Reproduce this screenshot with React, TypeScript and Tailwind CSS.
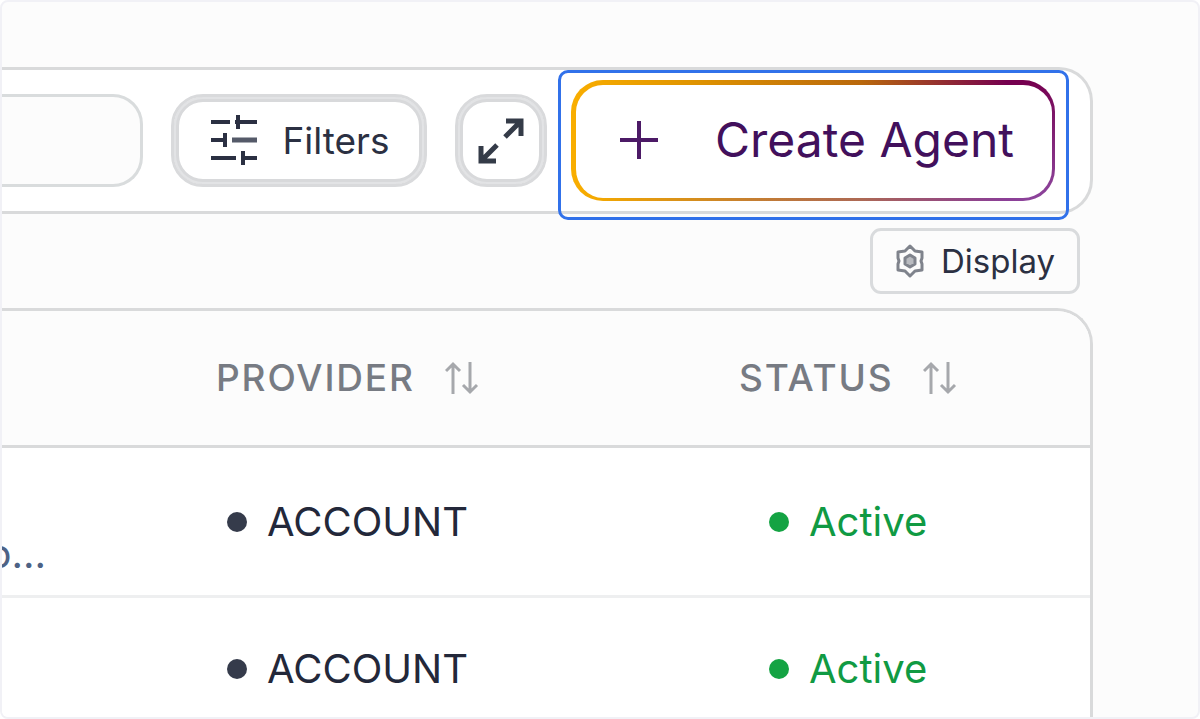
import React from 'react';

interface Agent {
  id: number;
  description: string;
  provider: string;
  status: string;
}

const agents: Agent[] = [
  { id: 1, description: 'o...', provider: 'ACCOUNT', status: 'Active' },
  { id: 2, description: '', provider: 'ACCOUNT', status: 'Active' },
];

const FiltersIcon = () => (
  <svg width="48" height="56" viewBox="0 0 48 56" fill="none" stroke="#2b3042" strokeWidth="4" aria-hidden="true">
    <path d="M1 9h19M25 9h22M1 27h14M1 45h25M31 45h16" />
    <path d="M22 27h25" stroke="#555a69" strokeWidth="5" />
    <path d="M28 2v14M15 20v14M33 38v14" />
  </svg>
);

const ExpandIcon = () => (
  <svg width="48" height="48" viewBox="0 0 48 48" fill="none" stroke="#343b48" strokeWidth="5" aria-hidden="true">
    <path d="M29 4h15v15M44 4L28 20M4 29v15h15M4 44l16-16" />
  </svg>
);

const PlusIcon = () => (
  <svg width="38" height="38" viewBox="0 0 38 38" fill="none" stroke="#4c1a66" strokeWidth="4" aria-hidden="true">
    <path d="M19 0v38M0 19h38" />
  </svg>
);

const GearIcon = () => (
  <svg width="30" height="34" viewBox="0 0 30 34" fill="none" stroke="#7f838c" strokeWidth="3" strokeLinejoin="round" aria-hidden="true">
    <path d="M15 2l5 5 7 1v6l-1 3 1 3v6l-7 1-5 5-5-5-7-1v-6l1-3-1-3V8l7-1z" />
    <path d="M15 11l5 3v6l-5 3-5-3v-6z" fill="#b9bbc0" />
  </svg>
);

const SortIcon = () => (
  <svg width="34" height="34" viewBox="0 0 34 34" fill="none" stroke="#a6a8ac" strokeWidth="3" aria-hidden="true">
    <path d="M8 33V3M1 10l7-7 7 7M25 1v30M18 24l7 7 7-7" />
  </svg>
);

interface SortHeaderProps {
  label: string;
}

const SortHeader: React.FC<SortHeaderProps> = ({ label }) => (
  <th scope="col" className="h-[137px] border-b-3 border-[#d9dadb] p-0 pl-4 text-left align-middle">
    <button type="button" className="flex items-center gap-[30px] text-[37px] leading-10 font-medium tracking-wider text-[#777b83]">
      {label}
      <SortIcon />
    </button>
  </th>
);

const Toolbar = () => (
  <div className="flex items-center rounded-r-[34px] border-3 border-l-0 border-[#d9dadb] bg-white py-[10px] pr-[35px]">
    <input
      type="text"
      aria-label="Search agents"
      className="h-[93px] min-w-0 flex-1 rounded-r-[30px] border-3 border-l-0 border-[#d9dcdd] bg-[#fcfcfc] px-4 text-[36px] outline-none"
    />
    <button
      type="button"
      className="ml-7 flex h-[93px] w-64 shrink-0 items-center justify-center gap-6 rounded-[32px] border-3 border-[#d9dadc] bg-white pl-[2px] text-[37px] leading-10 text-[#2b3042] shadow-[inset_0_0_0_2px_#e2e3e5,inset_0_0_0_5px_#d8d9db]"
    >
      <FiltersIcon />
      Filters
    </button>
    <button
      type="button"
      aria-label="Expand"
      className="ml-7 flex h-[93px] w-[92px] shrink-0 items-center justify-center rounded-[32px] border-3 border-[#d9dadc] bg-white shadow-[inset_0_0_0_2px_#e2e3e5,inset_0_0_0_5px_#d8d9db]"
    >
      <ExpandIcon />
    </button>
    <div className="relative ml-6 shrink-0">
      <button
        type="button"
        className="flex h-[121px] w-[484px] items-center justify-between rounded-[32px] border-t-5 border-r-3 border-b-3 border-l-5 border-transparent bg-origin-border pr-[38px] pb-1 pl-11 text-[48px] leading-14 text-[#42105c] [background-clip:padding-box,border-box,border-box] [background-image:linear-gradient(#fff,#fff),linear-gradient(165deg,transparent_50%,#9a6bc8aa),linear-gradient(to_right,#f9ae00,#e09400_25%,#b9680c_60%,#75004f_90%)]"
      >
        <PlusIcon />
        Create Agent
      </button>
      {/* highlight around the primary action */}
      <div className="pointer-events-none absolute -top-[10px] -right-[14px] -bottom-[19px] -left-[13px] rounded-[10px] border-3 border-[#3171ea]" />
    </div>
  </div>
);

const AgentsTable = () => (
  <div className="overflow-hidden rounded-tr-[36px] border-3 border-b-0 border-l-0 border-[#d9dadb] bg-white">
    <table className="w-full table-fixed border-separate border-spacing-0">
      <colgroup>
        <col />
        <col className="w-[523px]" />
        <col className="w-[367px]" />
      </colgroup>
      <thead className="bg-[#fcfcfc]">
        <tr>
          <td className="border-b-3 border-[#d9dadb]" />
          <SortHeader label="PROVIDER" />
          <SortHeader label="STATUS" />
        </tr>
      </thead>
      <tbody>
        {agents.map((agent) => (
          <tr key={agent.id} className="h-36 first:h-[150px]">
            <td className="border-b-3 border-[#eeeff0] p-0 align-middle">
              <div className="flex w-11 justify-end overflow-hidden pt-16 text-[40px] leading-12 text-[#4d6285]">
                {agent.description}
              </div>
            </td>
            <td className="border-b-3 border-[#eeeff0] p-0 pl-[27px] align-middle">
              <div className="flex items-center gap-5 text-[40px] leading-12 text-[#23283a]">
                <span className="size-5 rounded-full bg-[#353b4b]" />
                {agent.provider}
              </div>
            </td>
            <td className="border-b-3 border-[#eeeff0] p-0 pl-[46px] align-middle">
              <div className="flex items-center gap-5 text-[40px] leading-12 text-[#109a43]">
                <span className="size-5 rounded-full bg-[#14a343]" />
                {agent.status}
              </div>
            </td>
          </tr>
        ))}
      </tbody>
    </table>
  </div>
);

const App = () => {
  return (
    <div className="h-screen overflow-hidden rounded-lg border-2 border-[#f1f1f6] bg-[#fcfcfc] pt-[65px] pr-[105px] font-['Inter',sans-serif]">
      <Toolbar />
      <div className="my-[14px] flex justify-end pr-[13px]">
        <button
          type="button"
          className="flex h-[66px] items-center gap-4 rounded-[11px] border-3 border-[#d9dbdd] px-[22px] text-[33px] leading-10 text-[#2b3042]"
        >
          <GearIcon />
          Display
        </button>
      </div>
      <AgentsTable />
    </div>
  );
};

export default App;
